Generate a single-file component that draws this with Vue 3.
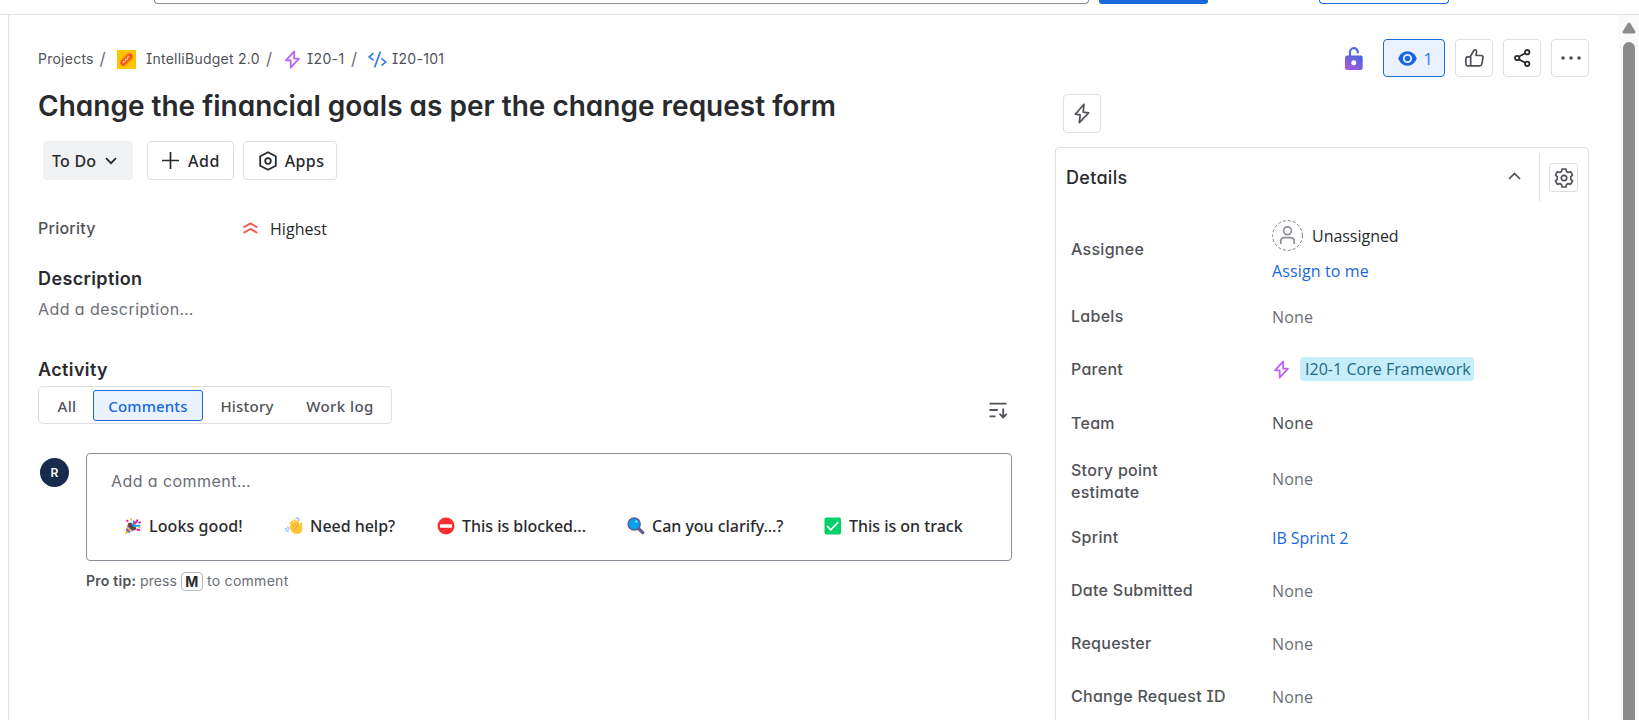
<script setup>
const tabs = [
  { name: 'All', width: 52, spacing: 0.4 },
  { name: 'Comments', width: 110, spacing: 0.15, active: true },
  { name: 'History', width: 88, spacing: 0.2 },
  { name: 'Work log', width: 98, spacing: 0.45 }
]

const quickReplies = [
  { icon: 'party', text: 'Looks good!', width: 161 },
  { icon: 'wave', text: 'Need help?', width: 152 },
  { icon: 'stop', text: 'This is blocked...', width: 190 },
  { icon: 'lens', text: 'Can you clarify...?', width: 197 },
  { icon: 'check', text: 'This is on track', width: 160 }
]

const fields = [
  { label: 'Labels', value: 'None' },
  { label: 'Parent', parent: 'I20-1 Core Framework' },
  { label: 'Team', value: 'None', kind: 'strong', size: 'mid' },
  { label: 'Story point estimate', value: 'None', size: 'tall' },
  { label: 'Sprint', value: 'IB Sprint 2', kind: 'link' },
  { label: 'Date Submitted', value: 'None' },
  { label: 'Requester', value: 'None' },
  { label: 'Change Request ID', value: 'None' }
]
</script>

<template>
  <div class="page">
    <header class="topbar">
      <div class="search"></div>
      <div class="create"></div>
      <div class="upgrade"></div>
    </header>

    <div class="body">
      <main class="issue">
        <nav class="crumbs">
          <span class="c-projects">Projects</span>
          <span class="slash s1">/</span>
          <svg class="project-icon" width="19" height="19" viewBox="0 0 19 19">
            <rect width="19" height="19" fill="#ffc400" />
            <g transform="rotate(-45 9.5 9.5)">
              <rect x="1.8" y="5.6" width="15.4" height="7.8" rx="3.8" fill="#ff8b00" />
              <rect x="2" y="7" width="15" height="5" rx="2.5" fill="#ee5a24" />
              <path d="M4.5 9.8l1.5-1 1.5 1 1.5-1 1.5 1 1.5-1 1.5 1" fill="none" stroke="#ffe3b8" stroke-width="1" />
            </g>
          </svg>
          <span class="c-name">IntelliBudget 2.0</span>
          <span class="slash s2">/</span>
          <svg class="epic" width="15" height="19" viewBox="0 0 15 19">
            <path d="M9.2 1.3L1 10.3h4.700v7.400L14 8.700H9.200z" fill="none" stroke="#bf63f3" stroke-width="1.8" stroke-linejoin="round" />
          </svg>
          <span class="c-epic">I20-1</span>
          <span class="slash s3">/</span>
          <svg class="code" width="19" height="17" viewBox="0 0 19 17">
            <path d="M5.6 2.2L1.2 5.8l4.400 3.600M13.400 7.400l4.400 3.600-4.400 3.600M12.400 0.600L6.600 16.400" fill="none" stroke="#357de8" stroke-width="1.7" />
          </svg>
          <span class="c-key">I20-101</span>
        </nav>

        <h1>Change the financial goals as per the change request form</h1>

        <div class="toolbar">
          <button class="status">
            <span>To Do</span>
            <svg width="12" height="8" viewBox="0 0 12 8"><path d="M1 1.2l5 5 5-5" fill="none" stroke="#292a2e" stroke-width="1.8" /></svg>
          </button>
          <button class="btn add">
            <svg width="17" height="17" viewBox="0 0 17 17"><path d="M8.5 0v17M0 8.5h17" stroke="#292a2e" stroke-width="1.7" /></svg>
            <span>Add</span>
          </button>
          <button class="btn apps">
            <svg width="18" height="20" viewBox="0 0 18 20">
              <path d="M9 1.2l7.800 4v9.600L9 18.800l-7.800-4V5.200z" fill="none" stroke="#292a2e" stroke-width="1.8" stroke-linejoin="round" />
              <circle cx="9" cy="10" r="2.8" fill="none" stroke="#292a2e" stroke-width="1.8" />
            </svg>
            <span>Apps</span>
          </button>
        </div>

        <div class="priority">
          <span class="label">Priority</span>
          <svg width="15" height="12" viewBox="0 0 15 12"><path d="M.6 5.400l6.900-4 6.900 4M.6 10.900l6.900-4 6.900 4" fill="none" stroke="#f15b50" stroke-width="1.8" /></svg>
          <span class="value">Highest</span>
        </div>

        <h2 class="h-desc">Description</h2>
        <p class="placeholder">Add a description…</p>

        <h2 class="h-act">Activity</h2>
        <div class="activity-bar">
          <div class="tabs">
            <button
              v-for="tab in tabs"
              :key="tab.name"
              :class="['tab', { active: tab.active }]"
              :style="{ width: tab.width + 'px', letterSpacing: tab.spacing + 'px' }"
            >{{ tab.name }}</button>
          </div>
          <svg class="sort" width="19" height="18" viewBox="0 0 19 18">
            <path d="M.5 1.700h17M.5 8h8.300M.5 14.400h6M14.200 6.500v9M10.600 11.800l3.600 3.600 3.600-3.600" fill="none" stroke="#505258" stroke-width="1.8" />
          </svg>
        </div>

        <div class="comment">
          <div class="avatar">R</div>
          <div class="comment-main">
            <div class="editor">
              <p class="placeholder">Add a comment…</p>
              <div class="quick">
                <div v-for="q in quickReplies" :key="q.icon" class="reply" :style="{ width: q.width + 'px' }">
                  <svg v-if="q.icon === 'party'" width="18" height="18" viewBox="0 0 18 18">
                    <path d="M4.2 6.2l7.200 6.400L.8 17.300z" fill="#ffb02e" />
                    <path d="M3.600 8.200l5.400 5.400M2.200 12l3.600 3.400" stroke="#5c62d6" stroke-width="1.8" />
                    <ellipse cx="8" cy="9.3" rx="2.3" ry="4.9" transform="rotate(-47 8 9.3)" fill="#6b3f3a" />
                    <path d="M8.200 8.600c2.600-1 .6-3.400 2.200-5M9.500 9.900c2.500-2.800 3.400.2 6.800-1.400" fill="none" stroke="#00a6ed" stroke-width="1.8" />
                    <path d="M10.600 7.400c0-2.800 2.600-1.400 3-5" fill="none" stroke="#f70a8d" stroke-width="1.8" />
                    <path d="M2.600 3.200l1.600 1.400M14.400 5.600l2.200-.4M12.400 12.400l3.600 1" stroke="#f70a8d" stroke-width="1.7" />
                    <path d="M6.600 1.200l.9 2.600M14.300 10.600l2.200.2" stroke="#ffb02e" stroke-width="1.5" />
                  </svg>
                  <svg v-else-if="q.icon === 'wave'" width="18" height="18" viewBox="0 0 18 18">
                    <path d="M6.2 5.3c-.8-1.5.9-2.5 1.8-1.100l1 1.500-.6-2c-.5-1.600 1.400-2.300 2-.8l1 2.200.1-1.200c.1-1.400 2-1.400 2.100.1l.5 4 1-1.700c.9-1.300 2.700-.5 2.200 1-.5 1.700 0 3.300.1 4.700 0 3.100-2.300 5.100-5.500 5.100-2.700 0-4.600-1.300-5.800-3.500l-1.700-3.300c-.7-1.400.9-2.200 1.700-1.100L4.900 6.700c-.5-1.200.6-2 1.300-1.400z" fill="#ffc83d" />
                    <path d="M7.300 7.200l1.500 3M10 6l1.300 3.300M12.600 6l.6 2.800M9.500 13.500c.2-2.300 1.700-3.700 4.100-4" fill="none" stroke="#e59a1d" stroke-width=".7" />
                    <path d="M10.500.8c2.200-.4 3.800.8 4 3M.8 10.800c-.3 1.900.7 3.500 2.700 4M2.900 9.500c-.2 1.500.5 2.600 1.600 3.100" fill="none" stroke="#9fc3fb" stroke-width="1.5" />
                  </svg>
                  <svg v-else-if="q.icon === 'stop'" width="18" height="18" viewBox="0 0 18 18">
                    <circle cx="9" cy="9" r="8.5" fill="#f92f2f" />
                    <rect x="3" y="7.3" width="12" height="3.4" rx=".8" fill="#fff" />
                  </svg>
                  <svg v-else-if="q.icon === 'lens'" width="18" height="18" viewBox="0 0 18 18">
                    <path d="M11.500 11.500l4.200 4.200" stroke="#635994" stroke-width="3.3" stroke-linecap="round" />
                    <circle cx="7.2" cy="7" r="6" fill="#00a6ed" stroke="#635994" stroke-width="1.5" />
                    <circle cx="9.4" cy="4.5" r="1.1" fill="#d3edff" />
                  </svg>
                  <svg v-else width="18" height="18" viewBox="0 0 18 18">
                    <rect x=".5" y=".5" width="16.5" height="17" rx="2" fill="#00d26a" />
                    <path d="M3.500 9.400l3.300 3.400 7-7.200" fill="none" stroke="#fff" stroke-width="1.6" stroke-linecap="round" />
                  </svg>
                  <span>{{ q.text }}</span>
                </div>
              </div>
            </div>
            <p class="tip"><b>Pro tip:</b><span class="press">press</span><kbd>M</kbd><span class="to">to comment</span></p>
          </div>
        </div>
      </main>

      <aside class="side">
        <div class="actions">
          <svg class="lock" width="18" height="23" viewBox="0 0 18 23">
            <defs>
              <linearGradient id="lockFill" x1="0" y1="1" x2=".7" y2="0">
                <stop offset="0" stop-color="#b658e0" />
                <stop offset="1" stop-color="#4a66de" />
              </linearGradient>
            </defs>
            <path d="M5 9V5.200a3.900 3.900 0 0 1 7.800-.3v1.400" fill="none" stroke="#4f6bdc" stroke-width="2.2" />
            <rect y="8.5" width="17.7" height="14.5" rx="2" fill="url(#lockFill)" />
            <circle cx="8.8" cy="15.7" r="2.5" fill="#fff" />
          </svg>
          <button class="btn watch">
            <svg width="19" height="15" viewBox="0 0 19 15">
              <path d="M9.500.3c4.300 0 7.700 2.900 9.200 7.200-1.500 4.300-4.900 7.200-9.200 7.200S1.800 11.800.3 7.500C1.800 3.200 5.200.3 9.500.3z" fill="#1868db" />
              <circle cx="9.5" cy="7.5" r="3.7" fill="#1868db" stroke="#e9f2fe" stroke-width="1.8" />
            </svg>
            <span>1</span>
          </button>
          <button class="btn square">
            <svg width="19" height="18" viewBox="0 0 19 18">
              <path d="M5.200 7.800l3.100-5.300c.3-.9.900-1.600 1.800-1.600 1.200 0 1.700 1.100 1.500 2.200l-.6 3.400h5.100c1.300 0 2.100 1 1.900 2.200l-1.200 6.400c-.2 1.100-1 1.800-2.100 1.800H2.800c-1.100 0-1.900-.8-1.900-1.900V9.700c0-1.100.8-1.900 1.900-1.900zM5.700 7.800v9.100" fill="none" stroke="#505258" stroke-width="1.7" stroke-linejoin="round" />
            </svg>
          </button>
          <button class="btn square">
            <svg width="17" height="18" viewBox="0 0 17 18">
              <path d="M4.800 7.800l6.300-3.500M4.800 10.200l6.300 3.500" stroke="#292a2e" stroke-width="1.8" />
              <g fill="none" stroke="#292a2e" stroke-width="1.8">
                <circle cx="3.2" cy="9" r="2.2" /><circle cx="13.2" cy="3.2" r="2.2" /><circle cx="13.2" cy="14.8" r="2.2" />
              </g>
            </svg>
          </button>
          <button class="btn square more">
            <svg width="20" height="4" viewBox="0 0 20 4"><g fill="#505258"><circle cx="2" cy="2" r="1.8" /><circle cx="10" cy="2" r="1.8" /><circle cx="18" cy="2" r="1.8" /></g></svg>
          </button>
        </div>

        <button class="btn automation">
          <svg width="16" height="21" viewBox="0 0 16 21">
            <path d="M9.900 1.300L1.300 11.400h13.300L5.700 19.700z" fill="none" stroke="none" />
            <path d="M10 1.300L1.300 11.200l4.900.6-.9 7.900 9.300-9.900-5.400-.6z" fill="none" stroke="#505258" stroke-width="1.7" stroke-linejoin="round" />
          </svg>
        </button>

        <section class="details">
          <header class="details-head">
            <h3>Details</h3>
            <svg class="chev" width="13" height="8" viewBox="0 0 13 8"><path d="M1 7l5.500-5.500L12 7" fill="none" stroke="#505258" stroke-width="1.7" /></svg>
            <div class="gear-wrap">
              <button class="btn gear">
                <svg width="20" height="20" viewBox="0 0 20 20">
                  <path d="M8.100 1h3.800l.6 2.500 1.600.9 2.500-.7 1.900 3.200-1.800 1.900v2.400l1.800 1.900-1.900 3.200-2.500-.7-1.600.9-.6 2.500H8.100l-.6-2.500-1.600-.9-2.500.7-1.900-3.200 1.800-1.900V8.800L1.500 6.900l1.900-3.200 2.500.7 1.600-.9z" fill="none" stroke="#505258" stroke-width="1.7" stroke-linejoin="round" />
                  <circle cx="10" cy="10" r="2.7" fill="none" stroke="#505258" stroke-width="1.7" />
                </svg>
              </button>
            </div>
          </header>

          <div class="field assignee">
            <span class="label">Assignee</span>
            <div class="assign">
              <div class="person">
                <svg width="31" height="31" viewBox="0 0 31 31">
                  <circle cx="15.5" cy="15.5" r="14.9" fill="none" stroke="#7d818a" stroke-width="1" stroke-dasharray="3 2" />
                  <g fill="none" stroke="#8c8f97" stroke-width="1.7">
                    <circle cx="15.5" cy="10.8" r="3.9" />
                    <path d="M8.800 24v-2.600c0-2.300 1.600-3.800 3.800-3.800h5.800c2.200 0 3.800 1.500 3.800 3.800V24" />
                  </g>
                </svg>
                <span>Unassigned</span>
              </div>
              <a class="me">Assign to me</a>
            </div>
          </div>

          <div v-for="f in fields" :key="f.label" :class="['field', f.size]">
            <span class="label">{{ f.label }}</span>
            <div v-if="f.parent" class="parent">
              <svg width="15" height="19" viewBox="0 0 15 19">
                <path d="M9.200 1.300L1 10.300h4.700v7.400L14 8.700H9.200z" fill="none" stroke="#bf63f3" stroke-width="1.8" stroke-linejoin="round" />
              </svg>
              <span class="pill">{{ f.parent }}</span>
            </div>
            <span v-else :class="['val', f.kind]">{{ f.value }}</span>
          </div>
        </section>
      </aside>

      <div class="scrollbar">
        <svg width="14" height="12" viewBox="0 0 14 12"><path d="M7 2L2 10h10z" fill="#8b8b8b" stroke="#8b8b8b" stroke-width="3" stroke-linejoin="round" /></svg>
        <div class="thumb"></div>
      </div>
    </div>
  </div>
</template>

<style>
body { background: #fff; overflow: hidden; }
</style>

<style scoped>
* { box-sizing: border-box; }
svg { display: block; flex: none; }
h1, h2, h3, p { margin: 0; }
button { font: inherit; color: inherit; padding: 0; margin: 0; }
.page {
  height: 720px;
  overflow: hidden;
  display: flex;
  flex-direction: column;
  color: #292a2e;
  font-family: Inter, "Liberation Sans", sans-serif;
  font-feature-settings: "cv11", "cv08";
}
.topbar {
  height: 15px;
  flex: none;
  border-bottom: 1px solid #dddee1;
  display: flex;
  align-items: flex-start;
  padding-left: 154px;
}
.search { width: 935px; height: 4px; border: 1px solid #8c8f97; border-top: 0; border-radius: 0 0 6px 6px; }
.create { width: 109px; height: 4px; margin-left: 10px; background: #1868db; border-radius: 0 0 3px 3px; }
.upgrade { width: 130px; height: 4px; margin-left: 111px; border: 1px solid #1868db; border-top: 0; border-radius: 0 0 4px 4px; }
.body { flex: 1; min-height: 0; display: flex; padding-left: 8px; }
.issue { width: 1005px; border-left: 1px solid #dddee1; padding: 34px 0 0 29px; }

.crumbs { display: flex; align-items: center; height: 20px; font-size: 14px; letter-spacing: 0.25px; color: #505258; white-space: nowrap; line-height: 20px; }
.slash { font-size: 17px; width: 8px; letter-spacing: 0; color: #6b6e76; }
.c-projects { width: 61.5px; }
.s1 { margin-right: 9.5px; }
.project-icon { margin-right: 10px; }
.c-name { width: 120px; letter-spacing: 0.25px; }
.s2 { margin-right: 11px; }
.epic { margin-right: 7px; }
.c-epic { width: 44px; letter-spacing: 0.35px; }
.s3 { margin-right: 9px; }
.code { margin-right: 5px; }
.c-key { letter-spacing: 0.3px; }

h1 { margin-top: 20px; font-size: 28px; line-height: 34px; font-weight: 600; white-space: nowrap; }
.toolbar { margin-top: 18px; padding-left: 5px; display: flex; height: 39px; font: 500 16px "Noto Sans", sans-serif; }
.status { width: 90px; border: 0; border-radius: 4px; background: #f0f1f2; display: flex; align-items: center; padding-left: 9px; gap: 9px; letter-spacing: 0.2px; }
.btn { border: 1px solid #dddee1; border-radius: 4px; background: #fff; display: flex; align-items: center; justify-content: center; flex: none; }
.add { width: 87px; margin-left: 14px; padding-left: 1px; gap: 9px; letter-spacing: 0.5px; }
.apps { width: 94px; margin-left: 9px; padding-left: 3px; gap: 8px; letter-spacing: 0.4px; }

.label { font-size: 16px; line-height: 22px; font-weight: 500; letter-spacing: 0.3px; color: #505258; }
.priority { margin-top: 37px; height: 22px; display: flex; align-items: center; }
.priority .label { width: 205px; letter-spacing: 0.25px; }
.priority svg { margin-top: -1px; }
.priority .value { margin: 1px 0 0 12px; font: 400 16px/22px "Open Sans", sans-serif; letter-spacing: 0.05px; }
h2 { font-size: 18px; line-height: 24px; font-weight: 600; letter-spacing: 0.38px; }
.h-desc { margin-top: 28px; }
.placeholder { font-size: 16px; line-height: 20px; letter-spacing: 0.43px; color: #6b6e76; }
.h-desc + .placeholder { margin-top: 8px; }
.h-act { margin-top: 39px; }
.activity-bar { margin: 4px 0 0 0; height: 38px; display: flex; justify-content: space-between; }
.tabs { display: flex; align-items: center; width: 354px; padding-left: 2px; border: 1px solid #dddee1; border-radius: 5px; font: 500 15px "Noto Sans", sans-serif; color: #505258; }
.tab { height: 31px; border: 1px solid transparent; border-radius: 3px; background: transparent; text-align: center; padding-top: 1px; }
.active { border-color: #1868db; background: #e9f2fe; color: #1868db; }
.sort { margin: 16px 5px 0 0; }

.comment { margin-top: 29px; display: flex; }
.avatar { width: 29px; height: 29px; margin: 5px 17px 0 2px; border-radius: 50%; background: #172b4d; color: #fff; font-size: 12px; font-weight: 600; line-height: 29px; text-align: center; }
.comment-main { width: 926px; }
.editor { height: 108px; border: 1px solid #8c8f97; border-radius: 4px; padding: 17px 0 0 24px; }
.quick { display: flex; padding-left: 13px; margin-top: 25px; font: 500 16px/20px "Noto Sans", sans-serif; letter-spacing: -0.03px; }
.reply { display: flex; align-items: center; gap: 7px; white-space: nowrap; }
.reply:first-child { letter-spacing: 0.1px; }
.tip { display: flex; align-items: center; margin-top: 10px; font-size: 14px; line-height: 20px; color: #6b6e76; letter-spacing: 0.25px; }
.tip b { font-weight: 600; color: #505258; width: 54px; }
.press { width: 41px; letter-spacing: 0.1px; }
kbd { width: 22px; height: 19px; border: 1px solid #b7b9be; border-radius: 4px; font: 700 14px/17px Inter, sans-serif; color: #292a2e; text-align: center; margin-right: 4px; }
.to { letter-spacing: 0.28px; }

.side { width: 534px; margin-left: 42px; padding-top: 24px; }
.actions { display: flex; justify-content: flex-end; align-items: center; height: 38px; }
.lock { margin-right: 20px; }
.actions .btn { height: 38px; margin-left: 10px; width: 38px; }
.actions .watch { width: 62px; margin-left: 0; padding-left: 3px; border-color: #1868db; background: #e9f2fe; color: #357de8; gap: 6px; font: 400 17px "Open Sans", sans-serif; }
.actions .more { padding-left: 1px; }
.automation { width: 38px; height: 39px; margin: 17px 0 0 8px; }
.details { margin-top: 14px; height: 700px; border: 1px solid #dddee1; border-radius: 4px; }
.details-head { display: flex; height: 53px; align-items: center; padding-left: 10px; }
h3 { font-size: 18px; line-height: 24px; font-weight: 500; letter-spacing: 0.3px; margin-top: 7px; }
.chev { margin: 3px 18px 0 auto; }
.gear-wrap { align-self: flex-end; height: 48px; width: 49px; border-left: 1px solid #dddee1; padding: 10px 0 0 9px; }
.gear { width: 29px; height: 29px; border-radius: 3px; }
.field { display: flex; align-items: center; height: 53px; padding-left: 15px; }
.field .label { width: 201px; letter-spacing: 0.28px; margin-top: -2px; }
.mid { height: 54px; }
.tall { height: 61px; }
.mid .label { margin-top: 0; }
.tall .label { margin-top: 0; padding-right: 90px; }
.tall .val { margin-top: -4px; }
.assignee { height: 89px; }
.assignee .label { margin-top: 7px; }
.assign { font: 400 16px/22px "Open Sans", sans-serif; }
.person { display: flex; align-items: center; gap: 9px; height: 31px; margin-top: 11px; letter-spacing: -0.03px; }
.me { display: block; margin-top: 9px; color: #1868db; letter-spacing: 0.12px; }
.val { font: 400 16px/22px "Open Sans", sans-serif; color: #6b6e76; letter-spacing: 0.2px; }
.strong { color: #505258; font-family: "Noto Sans", sans-serif; }
.link { color: #1868db; letter-spacing: -0.05px; }
.val, .pill { font-feature-settings: normal; }
.parent { display: flex; align-items: center; gap: 11px; padding-left: 2px; margin-top: -1px; }
.pill { height: 24px; padding: 0 4px 0 5px; width: 174px; white-space: nowrap; border-radius: 4px; background: #c6edfb; color: #206a83; font: 400 16px/24px "Open Sans", sans-serif; letter-spacing: 0.03px; }
.scrollbar { margin-left: auto; width: 21px; background: #fafafa; padding: 7px 0 0 4px; }
.thumb { margin: 8px 0 0 1px; width: 12px; height: 700px; border-radius: 6px; background: #8b8b8b; }
</style>
